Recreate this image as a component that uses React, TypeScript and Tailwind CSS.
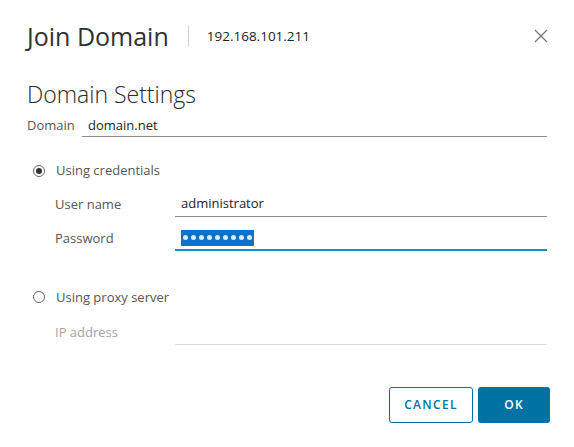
import { useState } from "react";

const font = { fontFamily: "'Open Sans', Lato, Arial, sans-serif" };

function Radio({ checked }: { checked: boolean }) {
  return (
    <span className="flex h-[12px] w-[12px] items-center justify-center rounded-full border border-[#666] bg-white">
      {checked && <span className="h-[6px] w-[6px] rounded-full bg-[#333]" />}
    </span>
  );
}

function Field({
  label,
  value,
  focused,
  disabled,
  masked,
}: {
  label: string;
  value?: string;
  focused?: boolean;
  disabled?: boolean;
  masked?: boolean;
}) {
  return (
    <div className="flex items-center">
      <div
        className={`w-[120px] text-[13px] ${disabled ? "text-[#a3a3a3]" : "text-[#565656]"}`}
      >
        {label}
      </div>
      <div
        className={`flex h-[24px] flex-1 items-center px-[6px] ${
          focused
            ? "border-b-2 border-[#1a8bcf]"
            : disabled
              ? "border-b border-[#dcdcdc]"
              : "border-b border-[#8c8c8c]"
        }`}
      >
        {masked ? (
          <span className="flex h-[16px] items-center gap-[3px] bg-[#0a73d0] px-[2px]">
            {Array.from({ length: 9 }).map((_, i) => (
              <span key={i} className="h-[5px] w-[5px] rounded-full bg-white/85" />
            ))}
          </span>
        ) : (
          <span className="text-[13px] text-[#222]">{value}</span>
        )}
      </div>
    </div>
  );
}

export default function App() {
  const [mode, setMode] = useState<"credentials" | "proxy">("credentials");

  return (
    <div className="h-[447px] w-[574px] bg-white" style={font}>
      <div className="flex items-center px-[27px] pt-[21px]">
        <h1 className="text-[25px] font-normal leading-[30px] text-[#313131]">Join Domain</h1>
        <div className="ml-[19px] h-[22px] w-px bg-[#cfcfcf]" />
        <div className="ml-[18px] text-[13.5px] font-medium text-[#222]">192.168.101.211</div>
        <button className="ml-auto mr-[-4px] flex h-[20px] w-[20px] items-center justify-center text-[#777]">
          <svg width="14" height="14" viewBox="0 0 14 14" fill="none" stroke="currentColor" strokeWidth="1.3">
            <path d="M1 1L13 13M13 1L1 13" />
          </svg>
        </button>
      </div>

      <div className="px-[27px] pt-[29px]">
        <h2 className="text-[23px] font-light leading-[28px] text-[#2a2a2a]">Domain Settings</h2>

        <div className="mt-[7px] flex items-center">
          <div className="w-[55px] text-[13px] text-[#565656]">Domain</div>
          <div className="flex h-[22px] flex-1 items-center border-b border-[#8c8c8c] px-[6px] text-[13px] text-[#222]">
            domain.net
          </div>
        </div>

        <div className="mt-[24px] pl-[6px]">
          <label className="flex items-center gap-[11px]" onClick={() => setMode("credentials")}>
            <Radio checked={mode === "credentials"} />
            <span className="text-[13px] text-[#565656]">Using credentials</span>
          </label>
          <div className="mt-[12px] flex flex-col gap-[10px] pl-[22px]">
            <Field label="User name" value="administrator" />
            <Field label="Password" focused masked />
          </div>

          <label className="mt-[37px] flex items-center gap-[11px]" onClick={() => setMode("proxy")}>
            <Radio checked={mode === "proxy"} />
            <span className="text-[13px] text-[#565656]">Using proxy server</span>
          </label>
          <div className="mt-[14px] pl-[22px]">
            <Field label="IP address" disabled />
          </div>
        </div>

        <div className="mr-[-3px] mt-[42px] flex justify-end gap-[5px]">
          <button className="h-[36px] w-[84px] rounded-[3px] border border-[#0072a3] text-[12px] font-semibold tracking-[1.3px] text-[#0072a3]">
            CANCEL
          </button>
          <button className="h-[36px] w-[72px] rounded-[3px] bg-[#0072a3] text-[12px] font-semibold tracking-[1.3px] text-white">
            OK
          </button>
        </div>
      </div>
    </div>
  );
}
